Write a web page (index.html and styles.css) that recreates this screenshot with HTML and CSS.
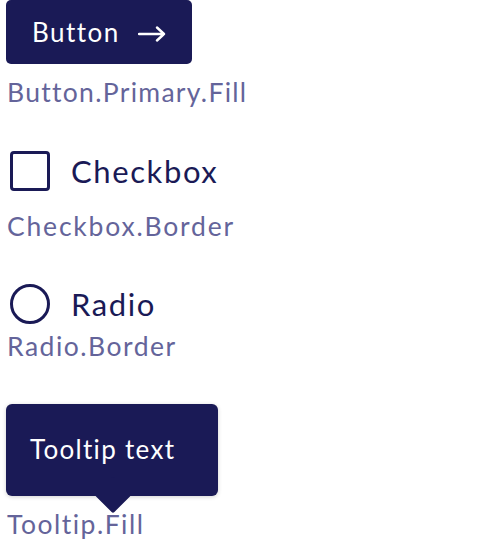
FILE: index.html
```html
<!DOCTYPE html>
<html>
<head>
<meta charset="utf-8">
<link rel="stylesheet" href="styles.css">
</head>
<body>
<div class="page">
  <div class="item item-button">
    <div class="button">
      <span class="button-text">Button</span>
      <svg class="arrow" width="28" height="16" viewBox="0 0 28 16"><path d="M1 8H26M19 1.5L26 8L19 14.5" fill="none" stroke="#fff" stroke-width="2.4" stroke-linecap="round" stroke-linejoin="round"/></svg>
    </div>
    <div class="label">Button.Primary.Fill</div>
  </div>
  <div class="item item-check">
    <div class="control">
      <span class="checkbox"></span>
      <span class="control-text">Checkbox</span>
    </div>
    <div class="label">Checkbox.Border</div>
  </div>
  <div class="item item-radio">
    <div class="control">
      <span class="radio"></span>
      <span class="control-text">Radio</span>
    </div>
    <div class="label">Radio.Border</div>
  </div>
  <div class="item item-tooltip">
    <div class="tooltip">
      <span class="tooltip-text">Tooltip text</span>
    </div>
    <div class="label label-tooltip">Tooltip.Fill</div>
  </div>
</div>
</body>
</html>
```
FILE: styles.css
```css
html, body {
  margin: 0;
  padding: 0;
  background: #ffffff;
}
body {
  font-family: "Lato", "Noto Sans", sans-serif;
  color: #1a1a56;
}
.page {
  display: flex;
  flex-direction: column;
  padding-left: 6px;
}
.button {
  display: inline-flex;
  align-items: center;
  box-sizing: border-box;
  width: 186px;
  height: 64px;
  padding-left: 26px;
  background: #1a1a56;
  border-radius: 5px;
  color: #ffffff;
}
.button-text {
  font-size: 26px;
  letter-spacing: 1.5px;
  line-height: 1;
}
.arrow {
  margin-left: 18px;
  margin-top: 4px;
}
.label {
  font-size: 26.5px;
  letter-spacing: 1.5px;
  line-height: 32px;
  color: #64649a;
  padding-left: 1px;
}
.item-button .label {
  margin-top: 12px;
  letter-spacing: 1.3px;
}
.item-check {
  margin-top: 43px;
}
.control {
  display: flex;
  align-items: center;
  height: 40px;
  padding-left: 4px;
}
.checkbox {
  box-sizing: border-box;
  width: 40px;
  height: 40px;
  border: 3.7px solid #1a1a56;
  border-radius: 4px;
}
.radio {
  box-sizing: border-box;
  width: 40px;
  height: 40px;
  border: 3.5px solid #1a1a56;
  border-radius: 50%;
}
.control-text {
  margin-left: 21px;
  font-size: 31px;
  letter-spacing: 1.6px;
  line-height: 1;
}
.item-check .label {
  margin-top: 19px;
  letter-spacing: 1.8px;
}
.item-radio {
  margin-top: 42px;
}
.item-radio .label {
  margin-top: 6px;
}
.item-tooltip {
  margin-top: 42px;
}
.tooltip {
  position: relative;
  box-sizing: border-box;
  width: 212px;
  height: 92px;
  padding-left: 24px;
  padding-bottom: 2px;
  display: flex;
  align-items: center;
  background: #1a1a56;
  border-radius: 6px;
  box-shadow: 0 1px 4px rgba(0, 0, 0, 0.18);
  color: #ffffff;
}
.tooltip::after {
  content: "";
  position: absolute;
  left: 94px;
  bottom: -12px;
  width: 26px;
  height: 26px;
  background: #1a1a56;
  transform: rotate(45deg);
  border-radius: 2px;
}
.tooltip-text {
  position: relative;
  z-index: 1;
  font-size: 26px;
  letter-spacing: 1.3px;
  line-height: 1;
}
.label-tooltip {
  margin-top: 12px;
}
```
